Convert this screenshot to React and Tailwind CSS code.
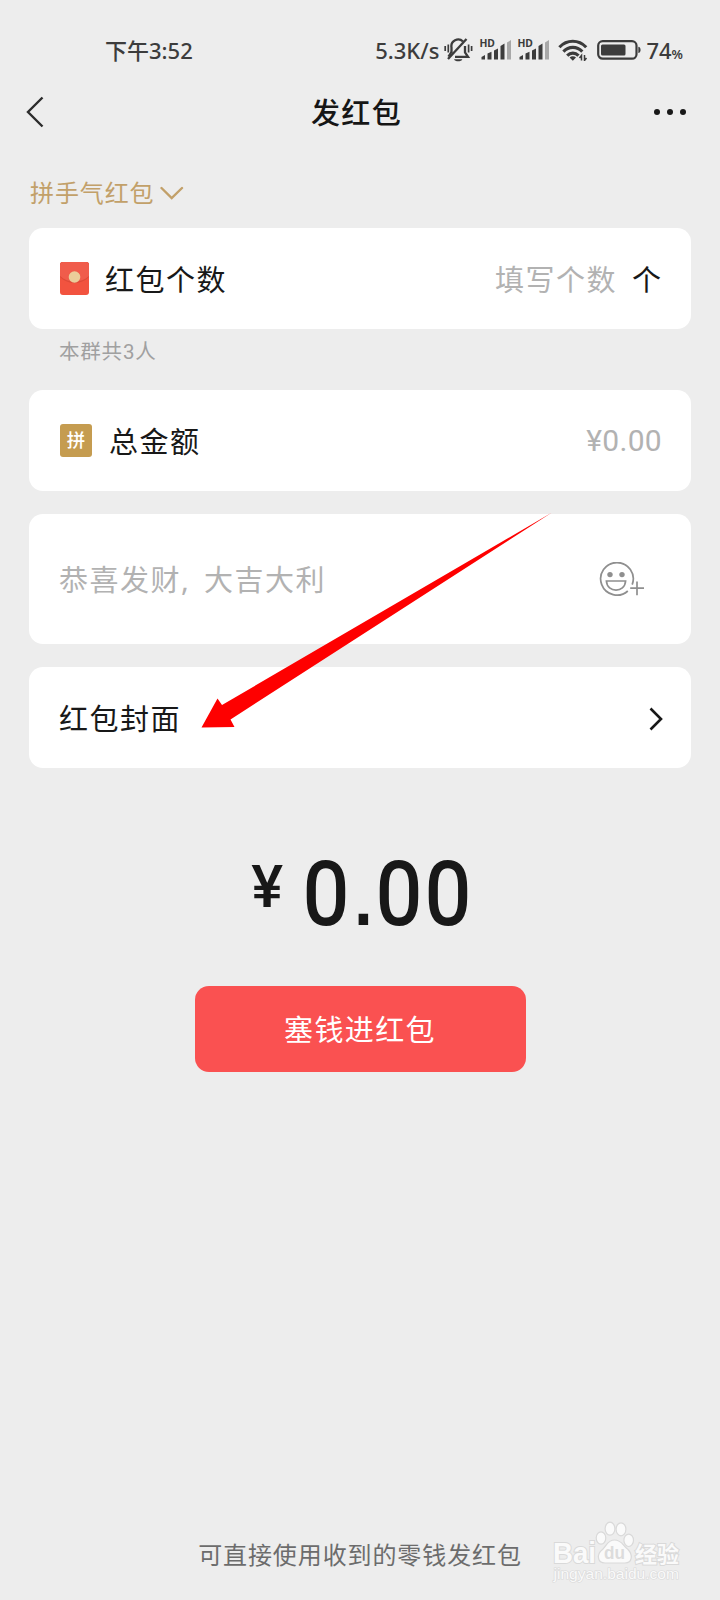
import React from "react";

const StatusBar = () => (
  <div className="flex h-[72px] items-center pt-7 pl-[105px] pr-[37px] text-[#3c3c3c]">
    <span className="text-[22px] leading-none font-medium">下午3:52</span>
    <div className="ml-auto flex items-center">
      <span className="text-[22px] leading-none font-medium">5.3K/s</span>
      <BellOffIcon />
      <SignalIcon />
      <SignalIcon />
      <WifiIcon />
      <BatteryIcon />
      <span className="ml-[5px] flex items-baseline leading-none">
        <span className="text-[22px] font-medium">74</span>
        <span className="text-[13px] font-semibold">%</span>
      </span>
    </div>
  </div>
);

const BellOffIcon = () => (
  <svg className="ml-[5px] h-[26px] w-[29px]" viewBox="0 0 29 26" fill="none" stroke="currentColor" strokeWidth="2.3">
    <path d="M7.500 16V10.500a6.800 6.800 0 0 1 11.500-6M21 9v6.500l3 4.300H11" />
    <path d="M4 22 22.500 2" />
    <path d="M7.500 15 4.500 19.700" />
    <path d="M1.200 9v5M4.300 7.500v8M27.600 9v5M24.600 7.500v8" strokeWidth="1.700" />
    <path d="M10 22.300h8.400c-1 2.700-7.400 2.700-8.400 0Z" fill="currentColor" stroke="none" />
  </svg>
);

const SignalIcon = () => (
  <svg className="ml-[7px] h-[22px] w-[31px] overflow-visible" viewBox="0 0 31 22" fill="currentColor">
    <text x="-0.600" y="7.900" fontSize="10.500" fontWeight="700" fontFamily="Noto Sans" textLength="15.500" lengthAdjust="spacingAndGlyphs">
      HD
    </text>
    <path d="M1.500 20.500v-2.500l3.500-2v4.500Z" />
    <path d="M7.500 14.500l4-1.700v7.700h-4ZM14 11.500l4-2v11h-4ZM20.500 7l4-2.500v16h-4Z" />
    <path d="M27 3.500l4-2.500v19.500h-4Z" fill="#a8a8a8" />
  </svg>
);

const WifiIcon = () => (
  <svg className="ml-[9px] h-[22px] w-[30px]" viewBox="0 0 30 22" fill="none" stroke="currentColor" strokeWidth="3.100">
    <path d="M1.400 8.200c7.500-8 19.200-8 26.800 0" />
    <path d="M5.400 12.600c5.300-5.600 13.600-5.600 18.900 0" />
    <path d="M9.200 16.700c3.300-3.400 8-3.400 11.300 0" />
    <path d="M14.800 21.800 11.600 18.400c1.800-1.700 4.600-1.700 6.400 0Z" fill="currentColor" stroke="none" />
    <path d="M23.500 21.500v-5l-2 2.500M26.500 16v5.500l2-2.500" strokeWidth="1.500" />
  </svg>
);

const BatteryIcon = () => (
  <svg className="ml-[9px] h-[20px] w-[44px]" viewBox="0 0 44 20">
    <rect x="1.200" y="1.100" width="38.300" height="17.600" rx="4.500" fill="none" stroke="currentColor" strokeWidth="2.200" />
    <rect x="4" y="4.500" width="24.500" height="11" rx="1.500" fill="currentColor" />
    <path d="M41.300 6.800c3 .4 3 5.800 0 6.200Z" fill="currentColor" />
  </svg>
);

const Header = () => (
  <header className="flex h-20 items-center justify-between pl-[26px] pr-[34px]">
    <svg className="h-8 w-[18px]" viewBox="0 0 18 32" fill="none" stroke="#2c2c2c" strokeWidth="2.400">
      <path d="M16.500 1.500 2 16l14.500 14.500" />
    </svg>
    <h1 className="ml-[15px] text-[29px] leading-none font-medium tracking-[1.400px] text-[#161616]">发红包</h1>
    <div className="flex gap-[7px]">
      <span className="h-1.5 w-1.5 rounded-full bg-[#181818]" />
      <span className="h-1.5 w-1.5 rounded-full bg-[#181818]" />
      <span className="h-1.5 w-1.5 rounded-full bg-[#181818]" />
    </div>
  </header>
);

const Card = ({ className = "h-[101px]", children }) => (
  <div className={`flex items-center rounded-[14px] bg-white px-[30px] text-[29px] leading-none tracking-[1.500px] text-[#181818] ${className}`}>
    {children}
  </div>
);

const EnvelopeIcon = () => (
  <svg className="ml-px h-[33px] w-[29px] shrink-0" viewBox="0 0 29 33">
    <rect width="29" height="33" rx="3" fill="#f2533f" />
    <path d="M3 0h23a3 3 0 0 1 3 3v12c-8 8-21 8-29 0V3a3 3 0 0 1 3-3Z" fill="#de4a38" />
    <path d="M3 0h23a3 3 0 0 1 3 3v11c-8 7.500-21 7.500-29 0V3a3 3 0 0 1 3-3Z" fill="#f05c4b" />
    <circle cx="14.500" cy="15" r="5.800" fill="#ebcd9a" />
  </svg>
);

const SmileyIcon = () => (
  <svg className="h-[35px] w-[45px]" viewBox="0 0 45 35" fill="none" stroke="#8f8f8f" strokeWidth="1.700">
    <path d="M28.800 29a16.300 16.300 0 1 1 4.400-6.400" />
    <path d="M7.400 19h19.200c-.8 12.200-18.400 12.200-19.200 0Z" />
    <path d="M31.200 26.200H45M38 19.500v13.700" />
    <circle cx="11" cy="12.600" r="2.700" fill="#8f8f8f" stroke="none" />
    <circle cx="23" cy="12.600" r="2.700" fill="#8f8f8f" stroke="none" />
  </svg>
);

const Watermark = () => (
  <div className="absolute right-[41px] bottom-[15px] h-[66px] w-[126px]">
    <svg className="h-full w-full overflow-visible" viewBox="0 0 126 66" fill="#fafafa" stroke="#d9d9d9" strokeWidth="1.200">
      <g fontFamily="Liberation Sans, Noto Sans CJK SC, sans-serif" fontWeight="700" paintOrder="stroke" strokeWidth="2">
        <text x="0" y="43.500" fontSize="30" textLength="43" lengthAdjust="spacingAndGlyphs">Bai</text>
        <text x="82" y="42.500" fontSize="22" textLength="44" lengthAdjust="spacingAndGlyphs">经验</text>
      </g>
      <ellipse cx="48" cy="19" rx="4.800" ry="6.200" />
      <ellipse cx="57" cy="9.700" rx="4.900" ry="6.500" />
      <ellipse cx="68" cy="10.300" rx="4.900" ry="6.500" />
      <ellipse cx="75.700" cy="21.300" rx="4.800" ry="6.200" />
      <path d="M61.500 21c-7 0-8 6-12 9.500-6.500 5-5 13.500 2.500 13.500h20c7.500 0 8-8.500 3-13.500-5-3.500-6-9.500-13.500-9.500Z" />
      <text x="51" y="40" fontSize="18" fontWeight="700" fontFamily="Liberation Sans" fill="#dcdcdc" stroke="none" textLength="21" lengthAdjust="spacingAndGlyphs">du</text>
      <text x="0.500" y="60" fontSize="14" fontFamily="Liberation Sans" paintOrder="stroke" textLength="125.500" lengthAdjust="spacingAndGlyphs">jingyan.baidu.com</text>
    </svg>
  </div>
);

const App = () => {
  return (
    <div className="relative flex min-h-[1600px] w-[720px] flex-col overflow-hidden bg-[#ededed] font-['Noto_Sans','Noto_Sans_CJK_SC',sans-serif]">
      <StatusBar />
      <Header />

      <main className="flex flex-col px-[29px]">
        {/* Type selector */}
        <div className="flex h-[76px] items-center pt-1.5 pl-px text-[#c2a069]">
          <span className="text-[24px] leading-none tracking-[0.900px]">拼手气红包</span>
          <svg className="ml-[5px] h-[14px] w-6" viewBox="0 0 24 14" fill="none" stroke="currentColor" strokeWidth="2.400" strokeLinecap="round">
            <path d="M1.500 2 11.700 12 22 2" />
          </svg>
        </div>

        <Card>
          <EnvelopeIcon />
          <span className="mt-0.5 ml-[16px]">红包个数</span>
          <span className="mt-0.5 ml-auto text-[#b2b2b2]">填写个数</span>
          <span className="mt-0.5 ml-[15px] -mr-[1.500px]">个</span>
        </Card>
        <p className="h-[61px] pl-[30px] text-[20.500px] leading-[45px] tracking-[0.800px] text-[#a0a0a0]">
          本群共<span className="font-['Roboto']">3</span>人
        </p>

        <Card>
          <span className="ml-px flex h-[33px] w-8 shrink-0 items-center justify-center rounded-[3px] bg-[#c59c50] pb-px text-[18.500px] font-medium tracking-normal text-white">
            拼
          </span>
          <span className="mt-0.5 ml-[17px]">总金额</span>
          <span className="-mr-px ml-auto font-['Roboto'] text-[30px] tracking-[0.300px] text-[#b2b2b2]">¥0.00</span>
        </Card>

        <Card className="mt-[23px] h-[130px]">
          <span className="flex text-[#b2b2b2]">
            恭喜发财<span className="w-[23px] font-['Noto_Sans']">,</span>大吉大利
          </span>
          <span className="mr-[17px] ml-auto">
            <SmileyIcon />
          </span>
        </Card>

        <Card className="mt-[23px] h-[101px] pt-0.5">
          <span>红包封面</span>
          <svg className="ml-auto -mr-[2px] h-6 w-[14px]" viewBox="0 0 14 24" fill="none" stroke="#181818" strokeWidth="2.600">
            <path d="M1.500 1.500 12 12 1.500 22.500" />
          </svg>
        </Card>

        {/* Total */}
        <div className="mt-[82px] flex items-start justify-center pl-[5px] font-['Roboto'] leading-none text-[#181818]">
          <span className="mt-[7px] mr-5 text-[60px] font-medium">¥</span>
          <span className="-mr-[11px] origin-left scale-x-[0.94] text-[87px] tracking-[3.200px] [-webkit-text-stroke:1.800px_#181818]">
            0<span className="font-['Liberation_Sans'] leading-none tracking-[1.300px]">.</span>00
          </span>
        </div>

        <button className="mx-auto mt-[48px] h-[86px] w-[331px] rounded-[14px] bg-[#fa5151] pt-0.5 text-[29px] tracking-[1.400px] text-white">
          塞钱进红包
        </button>
      </main>

      <footer className="mt-auto flex h-[90px] items-center justify-center text-[24px] tracking-[0.900px] text-[#6c6c6c]">
        可直接使用收到的零钱发红包
      </footer>

      <Watermark />

      {/* Pointer to the cover row */}
      <svg className="pointer-events-none absolute top-[510px] left-[200px] h-[220px] w-[354px]" viewBox="200 510 354 220">
        <path d="M201.500 727.500 217.500 698.500 222 705 552 512.500 230.500 719.500 234.500 727Z" fill="#fe0000" />
      </svg>
    </div>
  );
};

export default App;
